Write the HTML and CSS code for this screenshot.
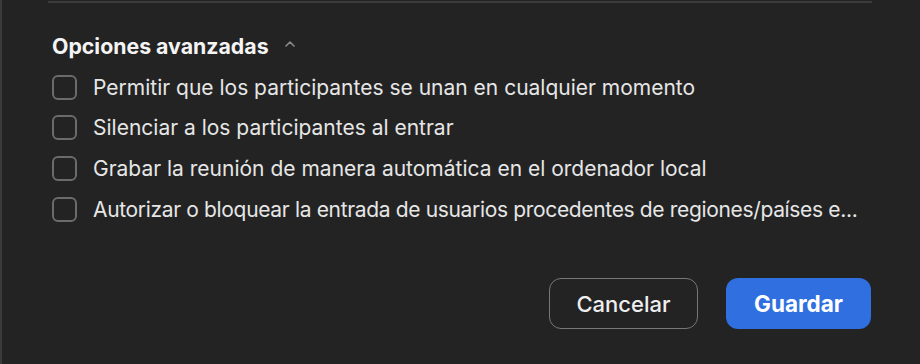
FILE: index.html
```html
<!DOCTYPE html>
<html lang="es">
<head>
<meta charset="utf-8">
<link rel="stylesheet" href="styles.css">
</head>
<body>
<div class="panel">
  <div class="divider"></div>
  <div class="section">
    <div class="header">
      <span class="title">Opciones avanzadas</span>
      <svg class="caret" width="10" height="6" viewBox="0 0 10 6"><path d="M1 5 L5 1 L9 5" fill="none" stroke="#8a8a8a" stroke-width="1.6" stroke-linecap="round" stroke-linejoin="round"/></svg>
    </div>
    <ul class="options">
      <li class="option"><span class="box"></span><span class="label">Permitir que los participantes se unan en cualquier momento</span></li>
      <li class="option"><span class="box"></span><span class="label">Silenciar a los participantes al entrar</span></li>
      <li class="option"><span class="box"></span><span class="label">Grabar la reunión de manera automática en el ordenador local</span></li>
      <li class="option"><span class="box"></span><span class="label label-long">Autorizar o bloquear la entrada de usuarios procedentes de regiones/países e...</span></li>
    </ul>
  </div>
  <div class="actions">
    <button class="btn btn-cancel">Cancelar</button>
    <button class="btn btn-save">Guardar</button>
  </div>
</div>
</body>
</html>
```
FILE: styles.css
```css
html, body {
  margin: 0;
  padding: 0;
  background: #232323;
}
body {
  width: 920px;
  height: 364px;
  overflow: hidden;
  font-family: Inter, "Noto Sans", "Liberation Sans", sans-serif;
  color: #ececec;
}
.panel {
  height: 364px;
  box-sizing: border-box;
  border-left: 2px solid #3a3a3a;
  padding-top: 1px;
}
.divider {
  margin-left: 46px;
  width: 824px;
  height: 2px;
  background: #3b3b3b;
}
.section {
  padding: 31px 0 0 50px;
}
.header {
  display: flex;
  align-items: center;
  gap: 16px;
  height: 24px;
}
.title {
  font-size: 21.3px;
  font-weight: 700;
  color: #f4f4f4;
}
.caret {
  margin-top: -4px;
}
.options {
  list-style: none;
  margin: 9px 0 0 0;
  padding: 0;
}
.option {
  display: flex;
  align-items: center;
  gap: 16px;
  height: 40.6px;
}
.box {
  flex: none;
  width: 21px;
  height: 21px;
  border: 2px solid #6b6b6b;
  border-radius: 6px;
}
.label {
  font-size: 21px;
  color: #e6e6e6;
  white-space: nowrap;
}
.label-long {
  letter-spacing: -0.34px;
}
.actions {
  display: flex;
  justify-content: flex-end;
  gap: 28px;
  padding: 49px 49px 0 0;
}
.btn {
  font-family: inherit;
  height: 51px;
  border-radius: 12px;
  box-sizing: border-box;
}
.btn-cancel {
  width: 149px;
  font-size: 22px;
  background: transparent;
  border: 1.5px solid #777777;
  color: #eeeeee;
  font-weight: 500;
}
.btn-save {
  width: 145px;
  font-size: 22.5px;
  background: #2f6fdf;
  border: none;
  color: #ffffff;
  font-weight: 700;
}
```
